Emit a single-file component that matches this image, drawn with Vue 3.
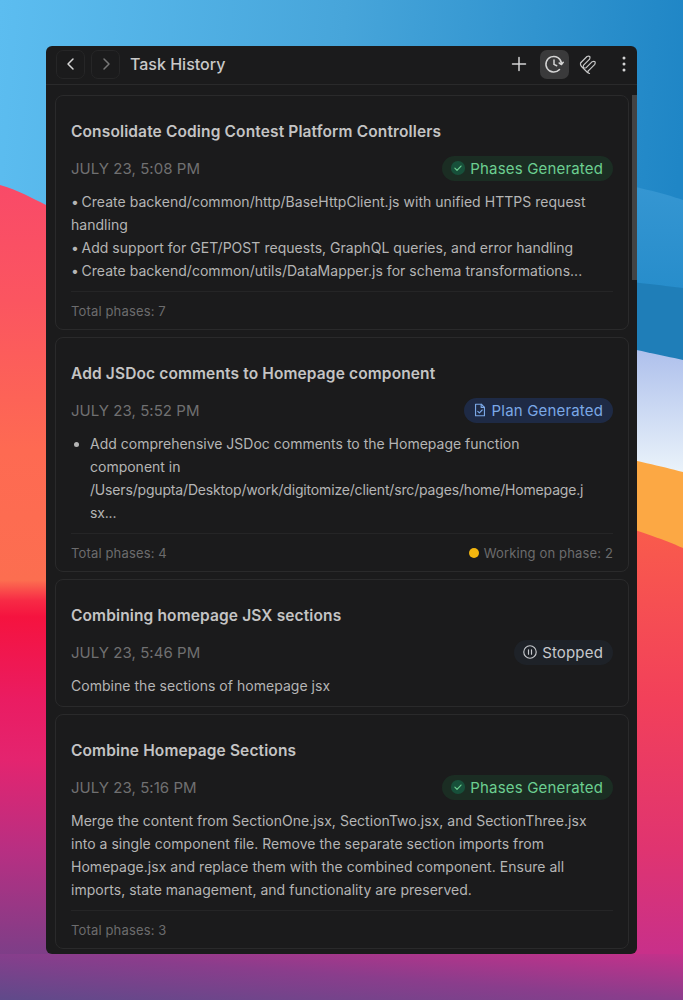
<script setup>
const tasks = [
  {
    title: 'Consolidate Coding Contest Platform Controllers',
    date: 'JULY 23, 5:08 PM',
    status: 'phases',
    label: 'Phases Generated',
    lines: [
      '•\u2009Create backend/common/http/BaseHttpClient.js with unified HTTPS request handling',
      '•\u2009Add support for GET/POST requests, GraphQL queries, and error handling',
      '•\u2009Create backend/common/utils/DataMapper.js for schema transformations...'
    ],
    phases: 7
  },
  {
    title: 'Add JSDoc comments to Homepage component',
    date: 'JULY 23, 5:52 PM',
    status: 'plan',
    label: 'Plan Generated',
    bullet: 'Add comprehensive JSDoc comments to the Homepage function component in ',
    path: '/Users/pgupta/Desktop/work/digitomize/client/src/pages/home/Homepage.jsx...',
    phases: 4,
    working: 2
  },
  {
    title: 'Combining homepage JSX sections',
    date: 'JULY 23, 5:46 PM',
    status: 'stopped',
    label: 'Stopped',
    lines: ['Combine the sections of homepage jsx']
  },
  {
    title: 'Combine Homepage Sections',
    date: 'JULY 23, 5:16 PM',
    status: 'phases',
    label: 'Phases Generated',
    lines: [
      'Merge the content from SectionOne.jsx, SectionTwo.jsx, and SectionThree.jsx into a single component file. Remove the separate section imports from Homepage.jsx and replace them with the combined component. Ensure all imports, state management, and functionality are preserved.'
    ],
    phases: 3
  }
]
</script>

<template>
  <div class="desktop">
    <svg class="wallpaper" viewBox="0 0 683 1000" preserveAspectRatio="none" aria-hidden="true">
      <defs>
        <linearGradient id="sky" x1="0" y1="0" x2="1" y2="0.12">
          <stop offset="0" stop-color="#5cbdf0" />
          <stop offset="0.5" stop-color="#47a5da" />
          <stop offset="1" stop-color="#1f86c6" />
        </linearGradient>
        <linearGradient id="warm" x1="0" y1="185" x2="0" y2="1000" gradientUnits="userSpaceOnUse">
          <stop offset="0" stop-color="#f94a68" />
          <stop offset="0.141" stop-color="#fb5560" />
          <stop offset="0.325" stop-color="#fe6a52" />
          <stop offset="0.485" stop-color="#fc6e50" />
          <stop offset="0.51" stop-color="#f72a45" />
          <stop offset="0.53" stop-color="#f5133f" />
          <stop offset="0.632" stop-color="#ea1c62" />
          <stop offset="0.705" stop-color="#e4246f" />
          <stop offset="0.816" stop-color="#b82f82" />
          <stop offset="0.951" stop-color="#7a3f88" />
          <stop offset="1" stop-color="#674588" />
        </linearGradient>
        <linearGradient id="pale" x1="0" y1="350" x2="0" y2="470" gradientUnits="userSpaceOnUse">
          <stop offset="0" stop-color="#aec0ec" />
          <stop offset="1" stop-color="#e9f2fa" />
        </linearGradient>
        <linearGradient id="upper" x1="0" y1="187" x2="0" y2="288" gradientUnits="userSpaceOnUse">
          <stop offset="0" stop-color="#3596d2" />
          <stop offset="1" stop-color="#278dcb" />
        </linearGradient>
        <linearGradient id="coral" x1="0" y1="530" x2="0" y2="954" gradientUnits="userSpaceOnUse">
          <stop offset="0" stop-color="#f95b4c" />
          <stop offset="0.4" stop-color="#f2405a" />
          <stop offset="0.75" stop-color="#e03470" />
          <stop offset="1" stop-color="#c8308a" />
        </linearGradient>
        <linearGradient id="floor" x1="0" y1="1000" x2="7.300" y2="900.500" gradientUnits="userSpaceOnUse">
          <stop offset="0" stop-color="#5f4a8a" />
          <stop offset="0.5" stop-color="#8a3d8c" />
          <stop offset="1" stop-color="#c9308a" />
        </linearGradient>
      </defs>
      <rect width="683" height="1000" fill="url(#sky)" />
      <path d="M600 180C637 187 660 192 683 200V300H600Z" fill="url(#upper)" />
      <path d="M600 278C637 283 660 285 683 288V370H600Z" fill="#1f7eb8" />
      <path d="M600 342C637 350 660 355 683 360V480H600Z" fill="url(#pale)" />
      <path d="M600 452C637 461 660 466 683 472V600H600Z" fill="#fca844" />
      <path d="M600 520C637 530 660 538 683 548V1000H600Z" fill="url(#coral)" />
      <path d="M0 185C18 190 32 198 46 205L60 210V1000H0Z" fill="url(#warm)" />
      <rect y="954" width="683" height="46" fill="url(#floor)" />
    </svg>

    <main class="window">
      <header class="topbar">
        <div class="nav">
          <button class="nav-btn" type="button" aria-label="Back">
            <svg viewBox="0 0 16 16" class="nav-icon"><path d="M10 3 5 8l5 5" /></svg>
          </button>
          <button class="nav-btn dim" type="button" aria-label="Forward">
            <svg viewBox="0 0 16 16" class="nav-icon"><path d="m6 3 5 5-5 5" /></svg>
          </button>
          <h1>Task History</h1>
        </div>
        <div class="tools">
          <button class="tool" type="button" aria-label="New">
            <svg viewBox="0 0 20 20"><path d="M10 3.500v13M3.500 10h13" /></svg>
          </button>
          <button class="tool active" type="button" aria-label="History">
            <svg viewBox="0 0 20 20">
              <path d="M17.500 9.500A7.800 7.800 0 1 0 15.500 15.500" />
              <path d="M10 6v4.400l2.700 1.300" />
              <path d="m15.200 9 2.300 1.500 1.700-2.200" />
            </svg>
          </button>
          <button class="tool" type="button" aria-label="Rules">
            <svg viewBox="0 0 20 20" class="thin">
              <path d="M2 8.500 8 2.500Q12 1.200 10.600 5.100L4.600 11.100Q3.200 15 7.200 13.700L13.200 7.700Q17.200 6.400 15.800 10.300L9.800 16.300Q7.500 18.500 10.500 19.500" />
              <path d="M2 8.500Q.500 10.500 3 13L8.500 18.500" />
            </svg>
          </button>
          <button class="tool" type="button" aria-label="More">
            <svg viewBox="0 0 20 20"><circle cx="10" cy="4" r="1.500" class="fill" /><circle cx="10" cy="10" r="1.500" class="fill" /><circle cx="10" cy="16" r="1.500" class="fill" /></svg>
          </button>
        </div>
      </header>

      <div class="content">
        <section class="list">
          <article v-for="task in tasks" :key="task.title" class="card" :class="{ 'no-foot': !task.phases }">
            <h2>{{ task.title }}</h2>
            <div class="meta">
              <time>{{ task.date }}</time>
              <span class="badge" :class="task.status">
                <svg v-if="task.status === 'phases'" viewBox="0 0 18 18" class="badge-icon">
                  <circle cx="9" cy="9" r="8" class="disc" />
                  <path d="m5.500 9.200 2.400 2.400 4.500-4.800" />
                </svg>
                <svg v-else-if="task.status === 'plan'" viewBox="0 0 18 18" class="badge-icon">
                  <path d="M4 2.500h6.500L14 6v9.500H4Z" />
                  <path d="M10.300 2.500V6H14" />
                  <path d="m6.500 10.500 1.800 1.800 3.200-3.300" />
                </svg>
                <svg v-else viewBox="0 0 18 18" class="badge-icon">
                  <circle cx="9" cy="9" r="7" />
                  <path d="M7.300 6.500v5M10.700 6.500v5" />
                </svg>
                <span>{{ task.label }}</span>
              </span>
            </div>
            <ul v-if="task.bullet" class="bullets"><li>{{ task.bullet }}<span class="path">{{ task.path }}</span></li></ul>
            <div v-else class="body">
              <p v-for="line in task.lines" :key="line">{{ line }}</p>
            </div>
            <footer v-if="task.phases" class="foot">
              <span>Total phases: {{ task.phases }}</span>
              <span v-if="task.working" class="working"><i class="dot"></i>Working on phase: {{ task.working }}</span>
            </footer>
          </article>
        </section>
        <div class="scrollbar"><div class="thumb"></div></div>
      </div>
    </main>
  </div>
</template>

<style scoped>
.desktop {
  position: relative;
  width: 683px;
  height: 1000px;
  box-sizing: border-box;
  padding: 46px;
  overflow: hidden;
  font-family: Inter, "Noto Sans", sans-serif;
}
.wallpaper {
  position: absolute;
  inset: 0;
  width: 100%;
  height: 100%;
}
.window {
  position: relative;
  height: 908px;
  display: flex;
  flex-direction: column;
  overflow: hidden;
  background: #1b1b1c;
  border-radius: 6px;
}
.topbar {
  flex: none;
  height: 38px;
  display: flex;
  align-items: center;
  justify-content: space-between;
  padding: 0 0 0 10px;
  border-bottom: 1px solid #2a2a2b;
}
.nav {
  display: flex;
  align-items: center;
  gap: 6px;
  margin-top: -2px;
}
.nav-btn {
  width: 29px;
  height: 29px;
  padding: 0;
  display: flex;
  align-items: center;
  justify-content: center;
  background: transparent;
  border: 1px solid #262627;
  border-radius: 7px;
}
.nav-icon {
  width: 16px;
  height: 16px;
  fill: none;
  stroke: #d6d6d6;
  stroke-width: 1.500;
  stroke-linecap: round;
  stroke-linejoin: round;
}
.nav-btn.dim .nav-icon {
  stroke: #777;
}
h1 {
  margin: 0 0 0 4px;
  font-size: 16px;
  font-weight: 500;
  color: #c9c9c9;
}
.tools {
  display: flex;
  align-items: center;
  gap: 9px;
  margin-top: -2px;
}
.tool {
  width: 26px;
  height: 29px;
  padding: 0;
  display: flex;
  align-items: center;
  justify-content: center;
  background: transparent;
  border: 0;
  border-radius: 7px;
}
.tool svg {
  width: 20px;
  height: 20px;
  fill: none;
  stroke: #d4d4d4;
  stroke-width: 1.500;
  stroke-linecap: round;
  stroke-linejoin: round;
}
.tool svg.thin {
  stroke-width: 1.200;
  stroke: #c8c8c8;
}
.tool .fill {
  fill: #d4d4d4;
  stroke: none;
}
.tool.active {
  width: 29px;
  margin: 0 -1.500px;
  background: #3a3a3b;
}
.content {
  position: relative;
  flex: 1;
  min-height: 0;
  overflow: hidden;
}
.list {
  display: flex;
  flex-direction: column;
  gap: 7px;
  padding: 10px 8px 0 9px;
}
.card {
  box-sizing: border-box;
  padding: 25px 15px 8px;
  border: 1px solid #2a2a2b;
  border-radius: 8px;
}
.card.no-foot {
  padding-bottom: 9px;
}
h2 {
  margin: 0;
  font-size: 15.500px;
  line-height: 22px;
  font-weight: 600;
  letter-spacing: 0.13px;
  color: #c4c4c4;
}
.meta {
  display: flex;
  align-items: center;
  justify-content: space-between;
  margin-top: 12px;
  height: 26px;
}
time {
  font-size: 15px;
  letter-spacing: 0.05px;
  color: #707071;
}
.badge {
  display: inline-flex;
  align-items: center;
  gap: 4px;
  height: 25px;
  padding: 0 10px 0 8px;
  border-radius: 13px;
  font-size: 15px;
  letter-spacing: 0.17px;
}
.badge-icon {
  width: 16px;
  height: 16px;
  fill: none;
  stroke: currentColor;
  stroke-width: 1.300;
  stroke-linecap: round;
  stroke-linejoin: round;
}
.badge.phases {
  color: #6ccf91;
  background: #1b2d23;
}
.badge.phases .disc {
  fill: #17503a;
  stroke: none;
}
.badge.plan {
  color: #7ba8e6;
  background: #1e2a45;
}
.badge.stopped {
  color: #c6c8cc;
  background: #1e2228;
}
.body,
.bullets {
  margin-top: 9px;
  padding-right: 23px;
  font-size: 14px;
  line-height: 23px;
  letter-spacing: 0.03px;
  color: #b5b5b5;
}
.body p {
  margin: 0;
}
.bullets {
  margin-bottom: 0;
  padding-left: 19px;
  letter-spacing: 0;
  overflow-wrap: anywhere;
}
.path {
  letter-spacing: -0.17px;
}
.foot {
  display: flex;
  justify-content: space-between;
  align-items: center;
  margin-top: 9px;
  padding-top: 9px;
  border-top: 1px solid #252526;
  font-size: 13px;
  line-height: 20px;
  letter-spacing: 0.15px;
  color: #6c6c6d;
}
.working {
  display: inline-flex;
  align-items: center;
  gap: 5px;
}
.dot {
  width: 10px;
  height: 10px;
  border-radius: 50%;
  background: #f3b60f;
}
.scrollbar {
  position: absolute;
  top: 10px;
  right: 0;
  bottom: 0;
  width: 5px;
}
.thumb {
  height: 185px;
  background: #434344;
}
</style>
